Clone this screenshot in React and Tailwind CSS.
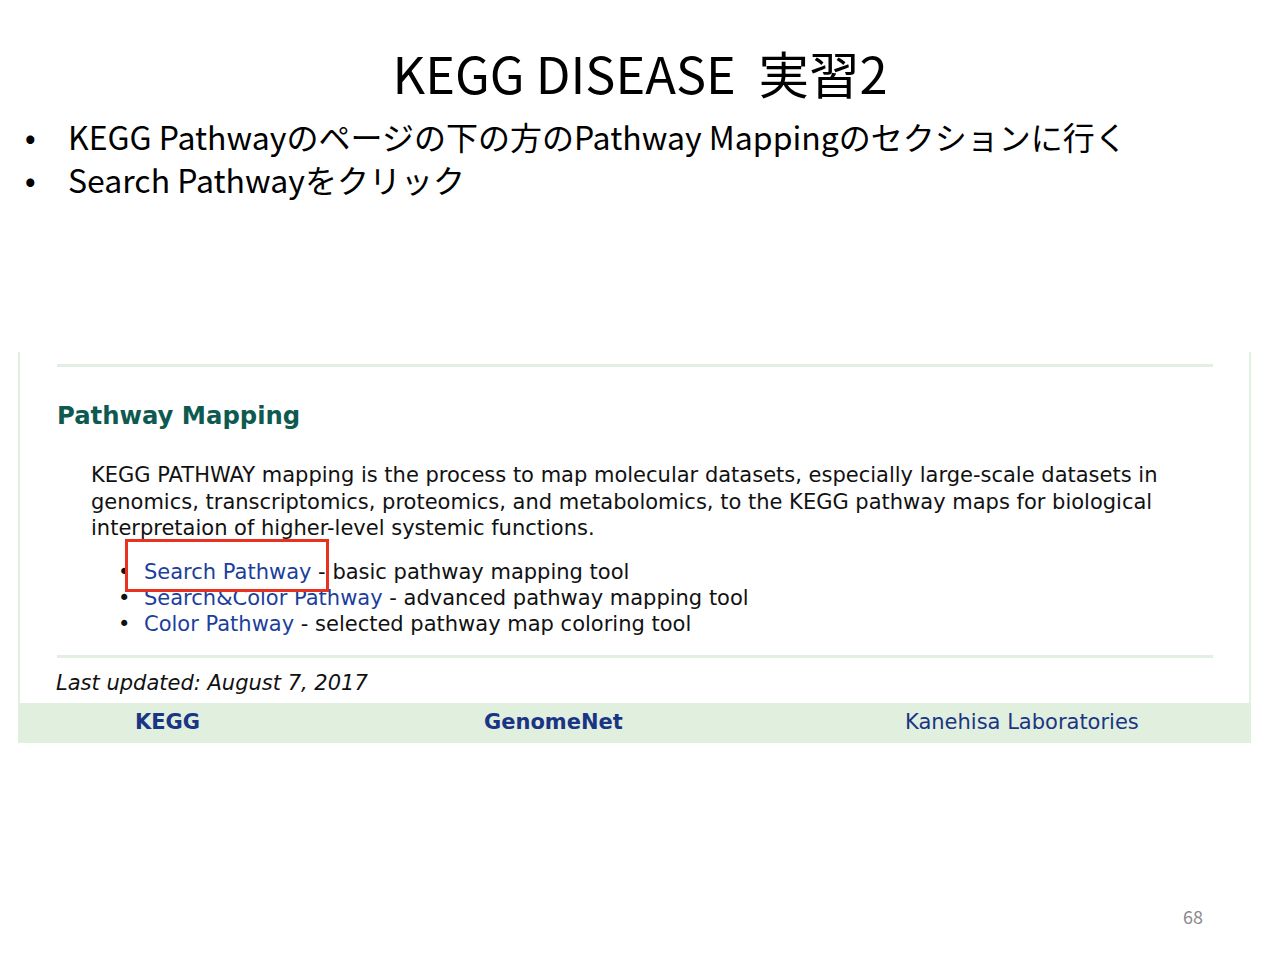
import React from 'react'

const slideFont = { fontFamily: '"Noto Sans CJK JP", "Noto Sans", sans-serif' }

const Bullet = ({ children }) => (
    <div className="flex items-center h-[43px]">
        <span className="block shrink-0 w-[68px] pl-[25px] text-[28px] font-bold leading-none">•</span>
        <span className="whitespace-nowrap">{children}</span>
    </div>
)

const links = [
    { name: 'Search Pathway', desc: 'basic pathway mapping tool' },
    { name: 'Search&Color Pathway', desc: 'advanced pathway mapping tool' },
    { name: 'Color Pathway', desc: 'selected pathway map coloring tool' },
]

const KeggPanel = () => (
    <div className="ml-[18px] w-[1233px] mt-[152px] font-['DejaVu_Sans',sans-serif]">
        <div className="border-x-2 border-[#e3efe3] pt-[12px] pl-[37px] pr-[36px] bg-white">
            <div className="h-[3px] bg-[#e3efe3]"></div>
            <h2 className="mt-[34px] text-[24.3px] leading-[30px] font-bold text-[#0e5a50]">Pathway Mapping</h2>
            <p className="mt-[31px] ml-[34px] text-[21px] leading-[26.5px] text-[#111]">
                KEGG PATHWAY mapping is the process to map molecular datasets, especially large-scale datasets in genomics, transcriptomics, proteomics, and metabolomics, to the KEGG pathway maps for biological interpretaion of higher-level systemic functions.
            </p>
            <ul className="relative mt-[17px] ml-[61px] text-[21px] leading-[26px] text-[#111]">
                {links.map(l => (
                    <li key={l.name} className="flex">
                        <span className="block shrink-0 w-[26px]">•</span>
                        <span><span className="text-[#1c3f9c]">{l.name}</span> - {l.desc}</span>
                    </li>
                ))}
                <div className="absolute left-[7px] top-[-20px] w-[204px] h-[53px] border-[3.5px] border-[#e8311f]"></div>
            </ul>
            <div className="mt-[18px] h-[3px] bg-[#e3efe3]"></div>
            <div className="mt-[12px] ml-[-1px] text-[21px] leading-[26px] italic text-[#111] pb-[7px]">Last updated: August 7, 2017</div>
        </div>
        <div className="h-[40px] bg-[#e1efdf] flex items-center text-[21px] text-[#1b3585]">
            <span className="block shrink-0 ml-[117px] w-[349px] font-bold">KEGG</span>
            <span className="block shrink-0 w-[421px] font-bold">GenomeNet</span>
            <span className="block shrink-0">Kanehisa Laboratories</span>
        </div>
    </div>
)

export default function App() {
    return (
        <div className="w-[1280px] h-[960px] bg-white relative overflow-hidden text-black" style={slideFont}>
            <h1 className="pt-[42px] h-[105px] text-center text-[50.5px] leading-[60px] whitespace-pre">KEGG DISEASE  実習2</h1>
            <div className="mt-[9px] text-[32px]">
                <Bullet>KEGG Pathwayのページの下の方のPathway Mappingのセクションに行く</Bullet>
                <Bullet>Search Pathwayをクリック</Bullet>
            </div>
            <KeggPanel />
            <div className="absolute right-[77px] top-[903px] text-[18px] text-[#8a8a8a]">68</div>
        </div>
    )
}
